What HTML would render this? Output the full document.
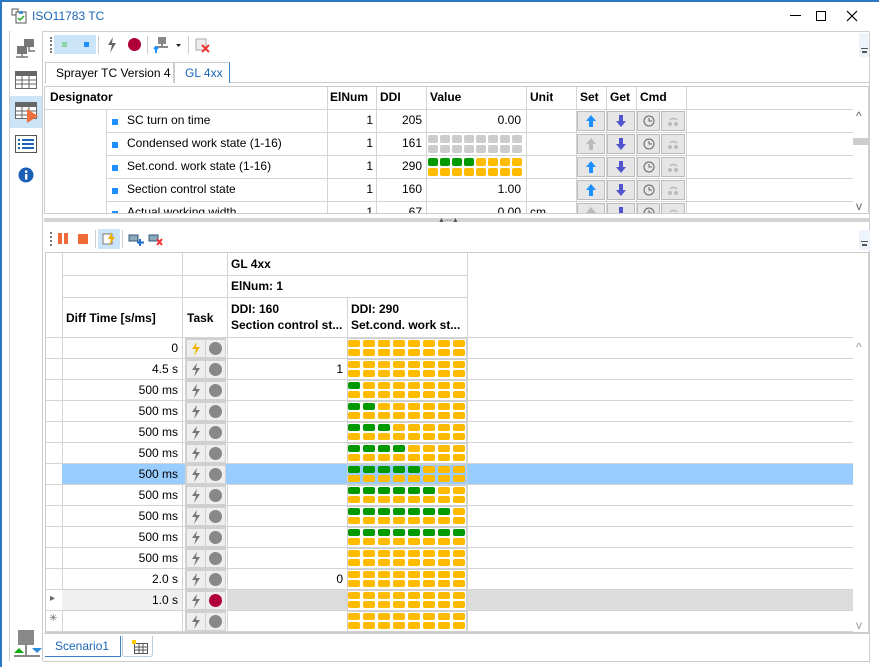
<!DOCTYPE html>
<html><head><meta charset="utf-8"><style>
*{box-sizing:border-box;margin:0;padding:0}
body{width:879px;height:667px;background:#fff;font-family:"Segoe UI","Liberation Sans",sans-serif;font-size:12px;color:#000;position:relative;overflow:hidden}
.a{position:absolute}
.t{white-space:nowrap;overflow:hidden}
</style></head><body>
<div class="a" style="left:0;top:0;width:879px;height:2px;background:#2b79c2"></div>
<div class="a" style="left:0;top:0;width:2px;height:667px;background:#2b79c2"></div>
<svg class="a" style="left:11px;top:8px" width="18" height="16"><rect x="1" y="1" width="6" height="6" fill="#fff" stroke="#555"/><rect x="5" y="4" width="10" height="11" fill="#fff" stroke="#555"/><rect x="8" y="3" width="4" height="3" fill="#4a90d0"/><path d="M7 10l2 2 4-4" stroke="#2a2" stroke-width="1.5" fill="none"/></svg>
<div class="a" style="left:32px;top:9px;color:#1b65b8;font-size:12px">ISO11783 TC</div>
<div class="a" style="left:790px;top:15px;width:11px;height:1px;background:#000"></div>
<div class="a" style="left:816px;top:11px;width:10px;height:10px;border:1px solid #000"></div>
<svg class="a" style="left:846px;top:10px" width="12" height="12"><path d="M1 1l10 10M11 1L1 11" stroke="#000" stroke-width="1.2"/></svg>
<div class="a" style="left:42px;top:31px;width:1px;height:630px;background:#ccc"></div>
<div class="a" style="left:9px;top:31px;width:1px;height:630px;background:#ccc"></div>
<svg class="a" style="left:15px;top:38px" width="24" height="20"><rect x="9" y="1" width="10" height="8" fill="#777"/><rect x="2" y="8" width="10" height="8" fill="#777"/><path d="M7 16v3M1 19h12M14 9v4h6" stroke="#777" stroke-width="1.5" fill="none"/></svg>
<svg class="a" style="left:15px;top:71px" width="22" height="18"><rect x="0.5" y="0.5" width="21" height="17" fill="#fff" stroke="#666"/><rect x="1" y="1" width="20" height="4" fill="#666"/><path d="M1 9h20M1 13h20M7 5v12M14 5v12" stroke="#666"/></svg>
<div class="a" style="left:10px;top:96px;width:32px;height:32px;background:#cce4f7"></div>
<svg class="a" style="left:15px;top:102px" width="24" height="22"><rect x="0.5" y="0.5" width="21" height="16" fill="#fff" stroke="#666"/><rect x="1" y="1" width="20" height="4" fill="#666"/><path d="M1 9h20M1 13h20M7 5v12M14 5v12" stroke="#666"/><path d="M12 7l11 7-11 7z" fill="#f07040"/></svg>
<svg class="a" style="left:15px;top:135px" width="22" height="18"><rect x="0.5" y="0.5" width="21" height="17" fill="#fff" stroke="#555"/><path d="M3 5h2M3 9h2M3 13h2M7 5h12M7 9h12M7 13h12" stroke="#1b65b8" stroke-width="2"/></svg>
<svg class="a" style="left:18px;top:167px" width="16" height="16"><circle cx="8" cy="8" r="7.5" fill="#1b5fb5"/><rect x="7" y="7" width="2.4" height="5.5" fill="#fff"/><circle cx="8.2" cy="4.6" r="1.3" fill="#fff"/></svg>
<svg class="a" style="left:12px;top:629px" width="30" height="30"><rect x="6" y="1" width="16" height="15" fill="#888"/><path d="M2 24l5-5 5 5z" fill="#1a1"/><path d="M20 19h10l-5 5z" fill="#2a8ad8"/><path d="M14 16v11M2 27h26" stroke="#888" stroke-width="2"/></svg>
<div class="a" style="left:50px;top:37px;width:1px;height:16px;border-left:2px dotted #777"></div>
<div class="a" style="left:54px;top:35px;width:42px;height:19px;background:#cce4f7"></div>
<div class="a" style="left:62px;top:42px;width:5px;height:5px;background:#8fd4a5"></div>
<div class="a" style="left:84px;top:42px;width:5px;height:5px;background:#1e90ff"></div>
<div class="a" style="left:98px;top:36px;width:1px;height:18px;background:#ccc"></div>
<svg class="a" style="left:106px;top:37px" width="12" height="16"><path d="M7 0L2 8h4l-2 8 6-10H6z" fill="#666"/></svg>
<div class="a" style="left:128px;top:38px;width:13px;height:13px;border-radius:50%;background:#b0003a"></div>
<div class="a" style="left:147px;top:36px;width:1px;height:18px;background:#ccc"></div>
<svg class="a" style="left:152px;top:36px" width="32" height="18"><rect x="6" y="1" width="8" height="7" fill="#888"/><path d="M10 8v3M3 11h13" stroke="#888" stroke-width="2"/><path d="M4 17v-6M2 13l2-2 2 2" stroke="#1e90ff" stroke-width="2" fill="none"/><path d="M24 8h5l-2.5 3z" fill="#222"/></svg>
<div class="a" style="left:188px;top:36px;width:1px;height:18px;background:#ccc"></div>
<svg class="a" style="left:194px;top:36px" width="18" height="18"><rect x="2" y="3" width="10" height="11" fill="#eee" stroke="#aaa"/><path d="M8 9l7 7M15 9l-7 7" stroke="#e33" stroke-width="2"/></svg>
<div class="a" style="left:859px;top:33px;width:11px;height:24px;background:#eef4fc"></div>
<div class="a" style="left:861px;top:48px;width:7px;height:1px;background:#555"></div>
<div class="a" style="left:862px;top:51px;width:5px;height:2px;background:#555"></div>
<div class="a" style="left:43px;top:31px;width:827px;height:1px;background:#d0d0d0"></div>
<div class="a" style="left:869px;top:31px;width:1px;height:632px;background:#d0d0d0"></div>
<div class="a" style="left:44px;top:82px;width:825px;height:1px;background:#ccc"></div>
<div class="a t" style="left:45px;top:62px;width:129px;height:21px;border:1px solid #ccc;border-bottom:none;background:#fff;padding:3px 0 0 10px">Sprayer TC Version 4</div>
<div class="a t" style="left:174px;top:62px;width:56px;height:21px;border:1px solid #ccc;border-right-color:#3b82c4;border-bottom:none;background:#fff;color:#1b65b8;padding:3px 0 0 10px">GL 4xx</div>
<div id="top"></div>
<div id="bot"></div>
<div class="a" style="left:44px;top:218px;width:825px;height:4px;background:#d4d4d4"></div>
<div class="a" style="left:438px;top:217px;font-size:7px;color:#555;letter-spacing:-1px">▲······▲</div>
<div class="a" style="left:50px;top:232px;width:1px;height:14px;border-left:2px dotted #777"></div>
<div class="a" style="left:58px;top:233px;width:4px;height:11px;background:#f06a3a"></div>
<div class="a" style="left:64px;top:233px;width:4px;height:11px;background:#f06a3a"></div>
<div class="a" style="left:78px;top:234px;width:10px;height:10px;background:#f06a3a"></div>
<div class="a" style="left:95px;top:230px;width:1px;height:18px;background:#ccc"></div>
<div class="a" style="left:98px;top:229px;width:22px;height:20px;background:#cce4f7"></div>
<svg class="a" style="left:102px;top:231px" width="16" height="16"><rect x="1" y="3" width="9" height="10" fill="#fff" stroke="#777"/><path d="M10 1L6 8h3l-2 7 6-9H10z" fill="#f0b000"/></svg>
<div class="a" style="left:122px;top:230px;width:1px;height:18px;background:#ccc"></div>
<svg class="a" style="left:128px;top:233px" width="40" height="14"><rect x="1" y="2" width="9" height="6" fill="#8ab" stroke="#357"/><path d="M12 6v7M9 9.5h7" stroke="#1e6fd0" stroke-width="2"/><rect x="21" y="2" width="9" height="6" fill="#8ab" stroke="#357"/><path d="M29 6l5 6M34 6l-5 6" stroke="#e33" stroke-width="2"/></svg>
<div class="a" style="left:859px;top:230px;width:11px;height:20px;background:#eef4fc"></div>
<div class="a" style="left:861px;top:241px;width:7px;height:1px;background:#555"></div>
<div class="a" style="left:862px;top:244px;width:5px;height:2px;background:#555"></div>
<div class="a" style="left:44px;top:633px;width:825px;height:1px;background:#ccc"></div>
<div class="a t" style="left:45px;top:636px;width:76px;height:21px;border-bottom:1px solid #3b82c4;border-right:1px solid #3b82c4;color:#1b65b8;padding:3px 0 0 10px">Scenario1</div>
<div class="a" style="left:122px;top:636px;width:31px;height:21px;border:1px solid #bcd;border-top:none;border-radius:0 0 3px 3px"></div>
<svg class="a" style="left:132px;top:640px" width="16" height="14"><rect x="2.5" y="3.5" width="13" height="10" fill="#fff" stroke="#555"/><path d="M3 7h12M3 10h12M7 4v9M11 4v9" stroke="#555"/><rect x="0" y="0" width="4" height="4" fill="#fc0"/></svg>
<div class="a" style="left:43px;top:661px;width:827px;height:1px;background:#ccc"></div>
<script>
function bits(x,y,g,w,h,gap,col){var s='';for(var r=0;r<2;r++)for(var i=0;i<8;i++){var c=col||(r==0&&i<g?'#009900':'#ffbb00');s+='<div class="a" style="left:'+(x+i*(w+gap))+'px;top:'+(y+r*(h+2))+'px;width:'+w+'px;height:'+h+'px;background:'+c+';border-radius:2px"></div>';}return s;}
function L(x,y,w,h,c){return '<div class="a" style="left:'+x+'px;top:'+y+'px;width:'+w+'px;height:'+(h||1)+'px;background:'+(c||'#d4d4d4')+'"></div>';}
function T(x,y,w,txt,st){return '<div class="a t" style="left:'+x+'px;top:'+y+'px;width:'+w+'px;'+(st||'')+'">'+txt+'</div>';}
var up='<svg width="10" height="12"><path d="M5 0L0 6h3v6h4V6h3z" fill="COL"/></svg>';
var dn='<svg width="10" height="12"><path d="M5 12L0 6h3V0h4v6h3z" fill="#5055cc"/></svg>';
var clk='<svg width="12" height="12"><circle cx="6" cy="6" r="5" fill="none" stroke="#666"/><path d="M6 3v3h3" stroke="#666" fill="none"/></svg>';
var cmd2='<svg width="14" height="12"><circle cx="4" cy="9" r="2" fill="#bbb"/><circle cx="10" cy="9" r="2" fill="#bbb"/><path d="M4 5a4 3 0 0 1 7 0" stroke="#bbb" fill="none" stroke-width="1.5"/></svg>';
var h='';
h+='<div class="a" style="left:44px;top:86px;width:825px;height:128px;border:1px solid #ccc;overflow:hidden">';
h+=L(0,22,808);
[282,331,381,481,531,561,591,641].forEach(function(x){h+=L(x,0,1,22);});
var hd=[[5,'Designator'],[285,'ElNum'],[335,'DDI'],[385,'Value'],[485,'Unit'],[535,'Set'],[565,'Get'],[595,'Cmd']];
hd.forEach(function(a){h+=T(a[0],3,200,a[1],'font-weight:bold;width:auto');});
var rows=[['SC turn on time','205','0.00',1],['Condensed work state (1-16)','161','',0],['Set.cond. work state (1-16)','290','',1],['Section control state','160','1.00',1],['Actual working width','67','0.00',0]];
rows.forEach(function(r,i){var y=23+i*23;
h+=L(61,y+22,747);[61,282,331,381,481,531,561,591,641].forEach(function(x){h+=L(x,y,1,22);});
h+=L(67,y+9,6,6,'#1e90ff');h+=T(82,y+3,200,r[0]);h+=T(282,y+3,46,'1','text-align:right');h+=T(331,y+3,46,r[1],'text-align:right');
if(r[2])h+=T(381,y+3,95,r[2],'text-align:right');
if(i==1)h+=bits(383,y+2,0,10,8,2,'#cccccc');if(i==2)h+=bits(383,y+2,4,10,8,2);if(i==4)h+=T(485,y+3,30,'cm');
var bs='height:20px;background:#e6e6e6;border:1px solid #bbb;display:flex;align-items:center;justify-content:center;';
h+='<div class="a" style="left:532px;top:'+(y+1)+'px;width:28px;'+bs+'">'+up.replace('COL',r[3]?'#1e90ff':'#bbb')+'</div>';
h+='<div class="a" style="left:562px;top:'+(y+1)+'px;width:28px;'+bs+'">'+dn+'</div>';
h+='<div class="a" style="left:592px;top:'+(y+1)+'px;width:23px;'+bs+'">'+clk+'</div>';
h+='<div class="a" style="left:616px;top:'+(y+1)+'px;width:24px;'+bs+'">'+cmd2+'</div>';});
h+=L(808,0,16,128,'#fff');h+=T(811,22,12,'^','color:#666');h+=T(811,112,12,'v','color:#666');h+=L(808,51,16,7,'#cdcdcd');
h+='</div>';
document.getElementById('top').outerHTML=h;
var g='<div class="a" style="left:45px;top:252px;width:824px;height:381px;border:1px solid #ccc;overflow:hidden">';
g+=L(16,0,1,380);g+=L(136,0,1,380);g+=L(181,0,1,380);g+=L(301,45,1,335);g+=L(421,0,1,380);
g+=L(16,22,405);g+=L(16,44,405);g+=L(0,84,807);
g+=T(185,4,100,'GL 4xx','font-weight:bold');g+=T(185,26,100,'ElNum: 1','font-weight:bold');
g+=T(20,58,110,'Diff Time [s/ms]','font-weight:bold');g+=T(141,58,40,'Task','font-weight:bold');
g+=T(185,48,114,'DDI: 160<br>Section control st...','font-weight:bold;line-height:16px');
g+=T(305,48,114,'DDI: 290<br>Set.cond. work st...','font-weight:bold;line-height:16px');
var tm=['0','4.5 s','500 ms','500 ms','500 ms','500 ms','500 ms','500 ms','500 ms','500 ms','500 ms','2.0 s','1.0 s',''];
var gr=[0,0,1,2,3,4,5,6,7,8,0,0,0,0];
tm.forEach(function(t,i){var y=85+i*21;
if(i==6)g+=L(16,y,791,20,'#99ccff');if(i==12){g+=L(16,y,120,20,'#f0f0f0');g+=L(181,y,626,20,'#dcdcdc');g+=T(4,y+3,10,'▸','color:#666;font-size:10px');}
if(i==13)g+=T(3,y+2,10,'✳','color:#666;font-size:10px');
g+=L(0,y+20,807);
g+=T(16,y+3,116,t,'text-align:right');
g+='<div class="a" style="left:139px;top:'+y+'px;width:41px;height:21px;background:#d0d0d0"></div>';
g+='<div class="a" style="left:141px;top:'+(y+2)+'px;width:18px;height:17px;background:#eee"><svg width="18" height="17"><path d="M10 2L5 9h4l-2 7 6-9H9z" fill="'+(i==0?'#f0b400':'#777')+'"/></svg></div>';
g+='<div class="a" style="left:160px;top:'+(y+2)+'px;width:19px;height:17px;background:#eee"></div>';
g+='<div class="a" style="left:163px;top:'+(y+4)+'px;width:13px;height:13px;border-radius:50%;background:'+(i==12?'#b0003a':'#888')+'"></div>';
if(i==1)g+=T(185,y+3,112,'1','text-align:right');if(i==11)g+=T(185,y+3,112,'0','text-align:right');
g+=L(301,y,120,21,'#d0d0d0');g+=L(302,y+1,118,19,i==6?'#99ccff':'#fff');
g+=bits(302,y+2,gr[i],12,7,3);});
g+=L(807,85,16,296,'#fff');g+=T(810,87,12,'^','color:#999');g+=T(810,365,12,'v','color:#999');
g+='</div>';
document.getElementById('bot').outerHTML=g;
</script>
</body></html>
